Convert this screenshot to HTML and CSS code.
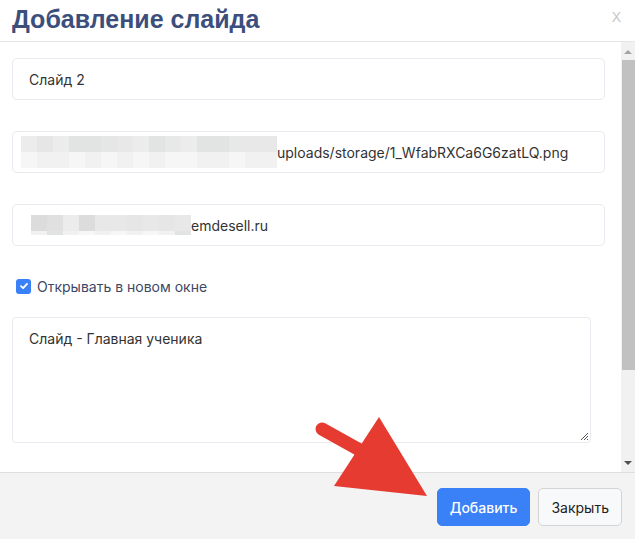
FILE: index.html
```html
<!DOCTYPE html>
<html lang="ru">
<head>
    <meta charset="UTF-8">
    <title>Добавление слайда</title>
    <link rel="stylesheet" href="styles.css">
</head>
<body>

    <div class="modal">
        <div class="modal-header">
            <h1>Добавление слайда</h1>
            <span class="close-x">X</span>
        </div>

        <div class="modal-body">
            <div class="form">
                <div class="field">Слайд 2</div>

                <!-- image path, first part is hidden -->
                <div class="field field-masked">
                    <div class="mosaic mosaic-wide">
                        <i class="a"></i><i class="b"></i><i class="a"></i><i class="c"></i><i class="c"></i><i class="b"></i><i class="d"></i><i class="a"></i>
                        <i class="c"></i><i class="d"></i><i class="a"></i><i class="c"></i><i class="c"></i><i class="d"></i><i class="d"></i><i class="d"></i>
                        <i class="e"></i><i class="f"></i><i class="f"></i><i class="e"></i><i class="f"></i><i class="e"></i><i class="f"></i><i class="e"></i>
                        <i class="f"></i><i class="e"></i><i class="e"></i><i class="f"></i><i class="f"></i><i class="e"></i><i class="f"></i><i class="f"></i>
                    </div>
                    <span>uploads/storage/1_WfabRXCa6G6zatLQ.png</span>
                </div>

                <!-- link, domain is hidden -->
                <div class="field field-masked">
                    <div class="mosaic mosaic-short">
                        <i class="g"></i><i class="h"></i><i class="a"></i><i class="g"></i><i class="d"></i><i class="d"></i><i class="b"></i><i class="d"></i><i class="b"></i><i class="d"></i>
                        <i class="f"></i><i class="c"></i><i class="f"></i><i class="e"></i><i class="f"></i><i class="e"></i><i class="f"></i><i class="e"></i><i class="f"></i><i class="c"></i>
                    </div>
                    <span>emdesell.ru</span>
                </div>

                <label class="check-row">
                    <span class="checkbox">
                        <svg width="10" height="10" viewBox="0 0 10 10"><path d="M2 5.2 L4.1 7.2 L8 2.9" fill="none" stroke="#fff" stroke-width="1.8" stroke-linecap="round" stroke-linejoin="round"/></svg>
                    </span>
                    Открывать в новом окне
                </label>

                <div class="textarea">
                    Слайд - Главная ученика
                    <svg class="grip" width="10" height="10" viewBox="0 0 10 10"><path d="M9 2 L2 9 M9 5 L5 9 M9 8 L8 9" stroke="#555" stroke-width="1"/></svg>
                </div>
            </div>

            <div class="scrollbar">
                <span class="arrow-up"></span>
                <div class="thumb"></div>
                <span class="arrow-down"></span>
            </div>
        </div>

        <div class="modal-footer">
            <button class="btn btn-primary">Добавить</button>
            <button class="btn btn-light">Закрыть</button>
        </div>
    </div>

    <!-- red pointer drawn over the screenshot -->
    <svg class="pointer" width="635" height="539" viewBox="0 0 635 539">
        <line x1="322" y1="429" x2="392" y2="468" stroke="#e53b31" stroke-width="13" stroke-linecap="round"/>
        <polygon points="379,417 334,486 427,496" fill="#e53b31"/>
    </svg>

</body>
</html>
```

FILE: styles.css
```css
body {
    margin: 0;
    padding: 0;
    background-color: #fff;
    font-family: Inter, "Noto Sans", sans-serif;
    font-size: 14px;
    color: #333;
}

.modal {
    width: 635px;
    height: 539px;
    display: flex;
    flex-direction: column;
    overflow: hidden;
}

.modal-header {
    height: 42px;
    border-bottom: 1px solid #e6e6e6;
    display: flex;
    justify-content: space-between;
    align-items: flex-start;
    box-sizing: border-box;
    flex-shrink: 0;
}

.modal-header h1 {
    margin: 0;
    padding: 4px 0 0 12px;
    font-family: "Liberation Sans", Arial, sans-serif;
    font-size: 25px;
    line-height: 30px;
    font-weight: bold;
    color: #3c4f7c;
}

.close-x {
    font-family: "Liberation Sans", Arial, sans-serif;
    font-size: 14px;
    line-height: 16px;
    color: #c6c6c6;
    padding: 9px 14px 0 0;
}

.modal-body {
    height: 430px;
    display: flex;
    flex-shrink: 0;
}

.form {
    flex: 1;
    padding: 16px 16px 0 12px;
}

.field {
    height: 42px;
    box-sizing: border-box;
    border: 1px solid #e9e9ef;
    border-radius: 5px;
    padding: 0 16px;
    display: flex;
    align-items: center;
    margin-bottom: 31px;
    color: #333;
}

.field-masked {
    padding-left: 8px;
}

.mosaic {
    display: grid;
    grid-auto-rows: 16px;
}

.mosaic-wide {
    grid-template-columns: repeat(16, 16px);
}

.mosaic-short {
    grid-template-columns: repeat(10, 16px);
    grid-template-rows: 16px 4px;
    margin-left: 10px;
}

.mosaic i { display: block; }
.mosaic .a { background: #ececec; }
.mosaic .b { background: #e5e6e5; }
.mosaic .c { background: #e2e3e3; }
.mosaic .d { background: #e8e8e8; }
.mosaic .e { background: #f6f6f6; }
.mosaic .f { background: #f1f1f1; }
.mosaic .g { background: #dcdcdc; }
.mosaic .h { background: #e0e0e0; }

.check-row {
    display: flex;
    align-items: center;
    gap: 6px;
    padding-left: 4px;
    margin-top: -1px;
    height: 20px;
    color: #3d4766;
}

.checkbox {
    width: 15px;
    height: 15px;
    border-radius: 3px;
    background-color: #3a80f7;
    display: flex;
    align-items: center;
    justify-content: center;
}

.textarea {
    position: relative;
    width: 579px;
    height: 126px;
    box-sizing: border-box;
    margin-top: 21px;
    border: 1px solid #e9e9ef;
    border-radius: 4px;
    padding: 12px 16px;
    line-height: 18px;
}

.textarea .grip {
    position: absolute;
    right: 1px;
    bottom: 1px;
}

.scrollbar {
    width: 14px;
    background-color: #f1f1f1;
    display: flex;
    flex-direction: column;
    align-items: center;
}

.arrow-up,
.arrow-down {
    width: 0;
    height: 0;
    border-left: 4px solid transparent;
    border-right: 4px solid transparent;
}

.arrow-up {
    border-bottom: 4px solid #a3a3a3;
    margin: 8px 0 6px;
}

.thumb {
    width: 13px;
    margin-left: 1px;
    height: 310px;
    background-color: #c1c1c1;
}

.arrow-down {
    border-top: 4px solid #505050;
    margin-top: auto;
    margin-bottom: 7px;
}

.modal-footer {
    flex: 1;
    background-color: #f3f3f3;
    border-top: 1px solid #dedede;
    display: flex;
    justify-content: flex-end;
    align-items: flex-start;
    gap: 8px;
    padding: 15px 13px 0 0;
}

.btn {
    height: 38px;
    border-radius: 5px;
    font-family: Inter, "Noto Sans", sans-serif;
    font-size: 14px;
    padding: 0 12px;
}

.btn-primary {
    background-color: #3a80f7;
    border: 1px solid #3a80f7;
    color: #fff;
    font-weight: 500;
}

.btn-light {
    background-color: #f8f9fa;
    border: 1px solid #d4d4d4;
    color: #222;
}

.pointer {
    position: absolute;
    left: 0;
    top: 0;
}
```
